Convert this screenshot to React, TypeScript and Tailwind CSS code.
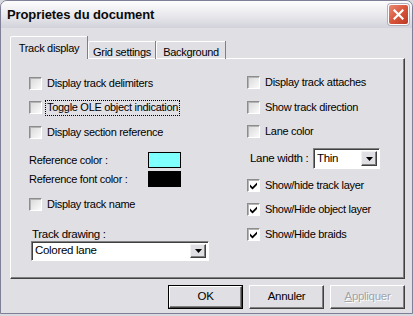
import React from 'react';

const ui = "font-['Liberation_Sans',Arial,sans-serif] text-[11px] tracking-[-0.3px] text-black";

function Check({ checked }: { checked?: boolean }) {
    return (
        <span
            className={`flex h-[13px] w-[13px] shrink-0 items-center justify-center border border-t-[#8c8c8c] border-l-[#8c8c8c] border-b-white border-r-white shadow-[inset_1px_1px_0_#b4b4b4] ${
                checked ? 'bg-white' : 'bg-gradient-to-br from-[#d8d8d8] to-[#fbfbfb]'
            }`}
        >
            {checked && (
                <svg width="9" height="9" viewBox="0 0 9 9">
                    <path d="M1 3.5 L3.5 6 L8 1.5 L8 4 L3.5 8.5 L1 6 Z" fill="#000" />
                </svg>
            )}
        </span>
    );
}

function CheckRow({ label, checked, focus, className = '' }: { label: string; checked?: boolean; focus?: boolean; className?: string }) {
    return (
        <div className={`flex h-[13px] items-center ${className}`}>
            <Check checked={checked} />
            <span
                className={`ml-[3px] flex h-[16px] items-center px-[1px] whitespace-nowrap ${
                    focus ? 'border border-dotted border-black' : 'border border-transparent'
                }`}
            >
                {label}
            </span>
        </div>
    );
}

function Arrow() {
    return (
        <span className="flex h-full w-[16px] items-center justify-center border border-t-[#f2f2f2] border-l-[#f2f2f2] border-b-[#404040] border-r-[#404040] bg-[#e0dfe3] shadow-[inset_-1px_-1px_0_#808080]">
            <svg width="7" height="4" viewBox="0 0 7 4">
                <path d="M0 0 H7 L3.5 4 Z" fill="#000" />
            </svg>
        </span>
    );
}

function Combo({ value, className }: { value: string; className: string }) {
    return (
        <div className={`flex items-stretch border border-t-[#808080] border-l-[#808080] border-b-white border-r-white shadow-[inset_1px_1px_0_#404040] bg-white p-[2px] pl-[3px] ${className}`}>
            <span className="flex flex-1 items-center text-[11.5px]">{value}</span>
            <Arrow />
        </div>
    );
}

function Button({ children, isDefault, disabled }: { children: React.ReactNode; isDefault?: boolean; disabled?: boolean }) {
    return (
        <div className={`h-[24px] w-[75px] ${isDefault ? 'border border-black' : ''}`}>
            <div className="flex h-full w-full items-center justify-center border border-t-white border-l-white border-b-[#404040] border-r-[#404040] bg-[#e0dfe3] shadow-[inset_-1px_-1px_0_#808080]">
                {disabled ? (
                    <span className="text-[11.5px] text-[#a3a3a8] [text-shadow:1px_1px_0_#fff]">
                        <span className="underline">A</span>ppliquer
                    </span>
                ) : (
                    <span className="text-[11.5px]">{children}</span>
                )}
            </div>
        </div>
    );
}

export default function App() {
    return (
        <div className={`h-[316px] w-[413px] bg-[#d9d9e0] ${ui}`}>
            <div className="flex h-[314px] w-[413px] flex-col overflow-hidden rounded-t-[7px] border border-[#7f7f97] bg-[#e0dfe3]">
                {/* title bar */}
                <div className="flex h-[27px] shrink-0 items-center justify-between bg-gradient-to-b from-[#fdfdfe] via-[#eaeaee] to-[#d2d2da] pl-[6px] pr-[3px]">
                    <span className="text-[13px] font-bold tracking-[-0.1px] text-[#0a0a0a]">Proprietes du document</span>
                    <span className="flex h-[21px] w-[21px] items-center justify-center rounded-[3px] border border-white bg-gradient-to-br from-[#e98a74] via-[#d9553a] to-[#bb3a26] shadow-[0_0_0_1px_#b0b0bd]">
                        <svg width="11" height="11" viewBox="0 0 11 11">
                            <path d="M1.5 1.5 L9.5 9.5 M9.5 1.5 L1.5 9.5" stroke="#fff" strokeWidth="2.2" strokeLinecap="square" />
                        </svg>
                    </span>
                </div>

                <div className="flex flex-1 flex-col pl-[9px] pt-[8px]">
                    {/* tabs */}
                    <div className="relative z-10 -mb-px flex h-[23px] items-end">
                        <div className="flex h-[23px] w-[77px] items-start justify-center border-l border-t border-white bg-[#e0dfe3] pt-[3px] shadow-[1px_0_0_#808080] rounded-tl-[2px]">
                            Track display
                        </div>
                        <div className="ml-[1px] flex h-[18px] w-[67px] items-start justify-center border-l border-t border-white pt-[2px] shadow-[1px_0_0_#808080] rounded-tl-[2px]">
                            Grid settings
                        </div>
                        <div className="ml-[1px] flex h-[18px] w-[69px] items-start justify-center border-l border-t border-white pt-[2px] shadow-[1px_0_0_#808080] rounded-tl-[2px]">
                            Background
                        </div>
                    </div>

                    {/* panel */}
                    <div className="flex h-[221px] w-[395px] border border-t-white border-l-white border-b-[#404040] border-r-[#404040] shadow-[inset_-1px_-1px_0_#808080]">
                        <div className="flex w-[218px] flex-col pl-[18px] pt-[18px]">
                            <CheckRow label="Display track delimiters" />
                            <CheckRow label="Toggle OLE object indication" focus className="mt-[11px]" />
                            <CheckRow label="Display section reference" className="mt-[12px]" />
                            <div className="mt-[13px] flex h-[16px] items-center">
                                <span className="w-[119px]">Reference color :</span>
                                <span className="h-[16px] w-[33px] border border-black bg-[#80ffff]" />
                            </div>
                            <div className="mt-[3px] flex h-[16px] items-center">
                                <span className="w-[119px]">Reference font color :</span>
                                <span className="h-[16px] w-[33px] border border-black bg-black" />
                            </div>
                            <CheckRow label="Display track name" className="mt-[11px]" />
                            <span className="mt-[17px] ml-[3px] h-[12px] leading-[12px] text-[11.5px]">Track drawing :</span>
                            <Combo value="Colored lane" className="mt-[1px] ml-[2px] h-[20px] w-[178px]" />
                        </div>
                        <div className="flex flex-col pl-[18px] pt-[17px]">
                            <CheckRow label="Display track attaches" />
                            <CheckRow label="Show track direction" className="mt-[12px]" />
                            <CheckRow label="Lane color" className="mt-[11px]" />
                            <div className="mt-[10px] flex h-[21px] items-center">
                                <span className="ml-[3px] w-[63px] text-[11.5px]">Lane width :</span>
                                <Combo value="Thin" className="h-[21px] w-[67px]" />
                            </div>
                            <CheckRow label="Show/hide track layer" checked className="mt-[10px]" />
                            <CheckRow label="Show/Hide object layer" checked className="mt-[11px]" />
                            <CheckRow label="Show/Hide braids" checked className="mt-[12px]" />
                        </div>
                    </div>

                    {/* buttons */}
                    <div className="mt-[6px] flex w-[395px] justify-end gap-[6px]">
                        <Button isDefault>OK</Button>
                        <Button>Annuler</Button>
                        <Button disabled>Appliquer</Button>
                    </div>
                </div>
            </div>
        </div>
    );
}
